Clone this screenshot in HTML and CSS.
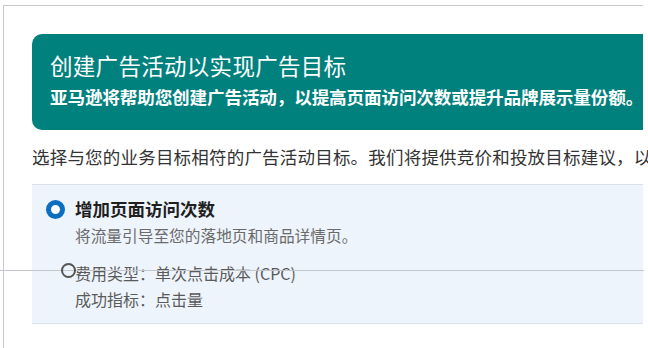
FILE: index.html
```html
<!DOCTYPE html>
<html lang="zh-CN">
<head>
<meta charset="utf-8">
<link rel="stylesheet" href="styles.css">
</head>
<body>
<div class="frame">
  <section class="hero">
    <h1 class="hero-title">创建广告活动以实现广告目标</h1>
    <p class="hero-sub">亚马逊将帮助您创建广告活动，以提高页面访问次数或提升品牌展示量份额。</p>
  </section>
  <p class="intro">选择与您的业务目标相符的广告活动目标。我们将提供竞价和投放目标建议，以</p>
  <div class="option">
    <div class="option-head">
      <span class="radio checked"></span>
      <span class="option-title">增加页面访问次数</span>
    </div>
    <div class="option-body">
      <p class="option-desc">将流量引导至您的落地页和商品详情页。</p>
      <p class="option-meta">费用类型：单次点击成本 (CPC)</p>
      <p class="option-meta">成功指标：点击量</p>
    </div>
  </div>
  <div class="overlay-line"></div>
  <span class="overlay-radio"></span>
</div>
</body>
</html>
```
FILE: styles.css
```css
html, body {
  margin: 0;
  padding: 0;
  background: #fff;
  overflow: hidden;
}
body {
  font-family: "Noto Sans CJK SC", "Noto Sans", sans-serif;
  width: 648px;
  height: 348px;
}
.frame {
  position: relative;
  margin: 5px 0 0 3px;
  width: 640px;
  height: 343px;
  border-top: 1px solid #c9c9c9;
  border-left: 1px solid #c9c9c9;
  padding: 28px 0 0 28px;
  box-sizing: border-box;
}
.hero {
  background: #01817e;
  border-radius: 10px 0 0 10px;
  color: #fff;
  padding: 16px 0 0 18px;
  height: 96px;
  box-sizing: border-box;
  white-space: nowrap;
}
.hero-title {
  margin: 0;
  font-size: 22.5px;
  font-weight: 400;
  line-height: 30px;
  letter-spacing: 0.3px;
}
.hero-sub {
  margin: 2px 0 0;
  font-size: 17.6px;
  font-weight: 700;
  line-height: 30px;
  letter-spacing: -0.15px;
}
.intro {
  margin: 14px 0 0;
  font-size: 17.5px;
  line-height: 26px;
  color: #333;
  white-space: nowrap;
  letter-spacing: 0.2px;
  width: 620px;
}
.option {
  margin-top: 14px;
  background: #edf4fb;
  border-top: 1px solid #d9e1ea;
  border-bottom: 1px solid #d9e1ea;
  height: 140px;
  box-sizing: border-box;
  padding: 12px 0 0 14px;
}
.option-head {
  display: flex;
  align-items: center;
  gap: 10px;
  height: 24px;
}
.radio {
  width: 19px;
  height: 19px;
  border-radius: 50%;
  box-sizing: border-box;
}
.radio.checked {
  border: 5.5px solid #0b6fc1;
  background: #fff;
}
.option-title {
  font-size: 17.5px;
  font-weight: 700;
  color: #1f1f1f;
  line-height: 24px;
}
.option-body {
  padding-left: 29px;
}
.option-desc {
  margin: 3px 0 0;
  font-size: 15.7px;
  line-height: 24px;
  color: #6b6b6b;
}
.option-meta {
  margin: 0;
  font-size: 16px;
  line-height: 26px;
  color: #5a5a5a;
}
.option-desc + .option-meta {
  margin-top: 12px;
}
.overlay-line {
  position: absolute;
  left: -4px;
  top: 264px;
  width: 644px;
  height: 1px;
  background: #c3c7cc;
}
.overlay-radio {
  position: absolute;
  left: 57px;
  top: 257px;
  width: 15px;
  height: 15px;
  border: 2px solid #555;
  border-radius: 50%;
  box-sizing: border-box;
  background: transparent;
}
```
